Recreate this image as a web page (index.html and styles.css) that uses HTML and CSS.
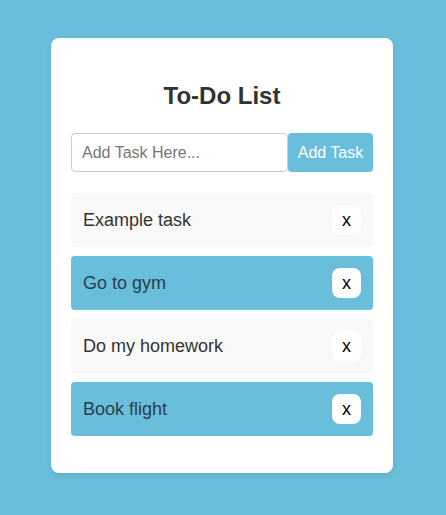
FILE: index.html
```html
<!DOCTYPE html>
<html lang="en">
<head>
<meta charset="utf-8">
<title>To-Do List</title>
<link rel="stylesheet" href="styles.css">
</head>
<body>
<div class="card">
  <h1 class="title">To-Do List</h1>
  <div class="add-row">
    <input class="task-input" type="text" placeholder="Add Task Here...">
    <button class="add-btn">Add Task</button>
  </div>
  <ul class="list">
    <li class="item">Example task<button class="del">x</button></li>
    <li class="item alt">Go to gym<button class="del">x</button></li>
    <li class="item">Do my homework<button class="del">x</button></li>
    <li class="item alt">Book flight<button class="del">x</button></li>
  </ul>
</div>
</body>
</html>
```

FILE: styles.css
```css
html, body {
  margin: 0;
  padding: 0;
}
body {
  background: #69bfdb;
  font-family: "Liberation Sans", Arial, sans-serif;
  padding-top: 38px;
  min-height: 515px;
  box-sizing: border-box;
}
.card {
  width: 342px;
  margin-left: calc(50% - 172px);
  background: #fff;
  border-radius: 8px;
  padding: 20px 20px 37px;
  box-sizing: border-box;
  box-shadow: 0 2px 6px rgba(0,0,0,0.1);
}
.title {
  margin: 26px 0 0;
  height: 49px;
  line-height: 24px;
  font-size: 24px;
  font-weight: bold;
  color: #333;
  text-align: center;
}
.add-row {
  display: flex;
  height: 39px;
}
.task-input {
  flex: 1;
  min-width: 0;
  box-sizing: border-box;
  height: 39px;
  border: 1px solid #ccc;
  border-radius: 4px;
  padding: 0 10px;
  font-family: inherit;
  font-size: 16px;
  color: #333;
  outline: none;
}
.task-input::placeholder {
  color: #777;
}
.add-btn {
  width: 85px;
  height: 39px;
  border: none;
  border-radius: 4px;
  background: #69bfdb;
  color: #fff;
  font-family: inherit;
  font-size: 16px;
  padding: 0;
}
.list {
  list-style: none;
  margin: 21px 0 0;
  padding: 0;
  display: flex;
  flex-direction: column;
  gap: 9px;
}
.item {
  display: flex;
  align-items: center;
  justify-content: space-between;
  height: 54px;
  box-sizing: border-box;
  padding: 0 12px;
  background: #f9f9f9;
  border-radius: 4px;
  font-size: 18px;
  color: #333;
}
.item.alt {
  background: #69bfdb;
  color: #2b3e4c;
}
.del {
  width: 29px;
  height: 30px;
  border: none;
  border-radius: 8px;
  background: #fff;
  color: #000;
  font-family: inherit;
  font-size: 18px;
  padding: 0;
}
```
